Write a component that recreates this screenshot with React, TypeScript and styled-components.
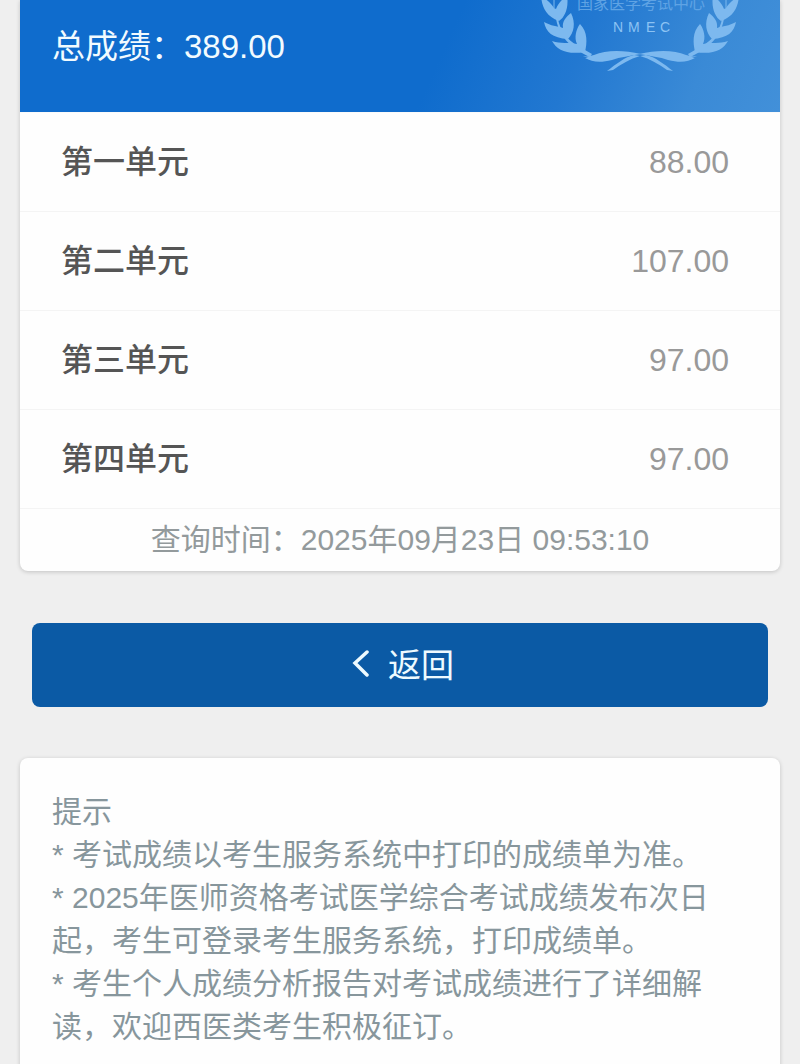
import styled, { createGlobalStyle } from "styled-components";

const units = [
  { name: "第一单元", score: "88.00" },
  { name: "第二单元", score: "107.00" },
  { name: "第三单元", score: "97.00" },
  { name: "第四单元", score: "97.00" },
];

const tips = [
  "* 考试成绩以考生服务系统中打印的成绩单为准。",
  "* 2025年医师资格考试医学综合考试成绩发布次日起，考生可登录考生服务系统，打印成绩单。",
  "* 考生个人成绩分析报告对考试成绩进行了详细解读，欢迎西医类考生积极征订。",
];

// one half of the wreath, mirrored for the other side
const Branch = () => (
  <>
    <path d="M1 -4C2 6 5 16 19 21C25 17 29 8 27 -5C23 -1 18 3 16 9L14 8C11 3 6 -1 1 -4Z" />
    <path d="M4 22C6 32 12 38 28 39C34 33 36 23 31 13C26 17 22 21 23 28C17 26 11 26 4 22Z" />
    <path d="M12 41C17 50 27 55 45 52C47 43 48 32 40 24C36 29 34 38 37 44C28 42 21 44 12 41Z" />
    <path d="M18 19C20 30 27 40 38 46L52 54L50 57C35 50 20 40 16 19Z" />
    <path d="M43 56C47 57 50 56 54 55C66 50 83 50 101 54C90 56 80 57 72 60C60 63 52 62 45 58L48 58Z" />
    <path d="M94 55C85 57 76 64 67 71L73 70C81 64 90 59 100 56Z" />
  </>
);

const Seal = () => (
  <SealSvg viewBox="0 0 200 72" aria-hidden="true">
    <g fill="#7db9ef">
      <Branch />
      <g transform="matrix(-1 0 0 1 200 0)">
        <Branch />
      </g>
      <path d="M14 -4V8" stroke="#7db9ef" strokeWidth="1" />
      <path d="M186 -4V8" stroke="#7db9ef" strokeWidth="1" />
    </g>
    <SealName x="37" y="9">
      国家医学考试中心
    </SealName>
    <SealCode x="73 88 106 120" y="32">
      NMEC
    </SealCode>
  </SealSvg>
);

export default function App() {
  return (
    <>
      <GlobalStyle />
      <Page lang="zh-CN">
        <ScoreCard>
          <Header>
            <Total>总成绩：389.00</Total>
            <Seal />
          </Header>
          <UnitList>
            {units.map((unit) => (
              <Unit key={unit.name}>
                <UnitName>{unit.name}</UnitName>
                <UnitScore>{unit.score}</UnitScore>
              </Unit>
            ))}
          </UnitList>
          <QueryTime>查询时间：2025年09月23日 09:53:10</QueryTime>
        </ScoreCard>
        <BackButton type="button">
          <svg width="18" height="30" viewBox="0 0 18 30" aria-hidden="true">
            <path
              d="M15 2L3 13L15 25"
              fill="none"
              stroke="currentColor"
              strokeWidth="3.5"
              strokeLinecap="round"
            />
          </svg>
          返回
        </BackButton>
        <TipsCard>
          <TipLine>提示</TipLine>
          {tips.map((tip) => (
            <TipLine key={tip}>{tip}</TipLine>
          ))}
        </TipsCard>
      </Page>
    </>
  );
}

const GlobalStyle = createGlobalStyle`
  * {
    box-sizing: border-box;
  }
  body {
    margin: 0;
    background: #efefef;
    font-family: "Liberation Sans", "Noto Sans CJK SC", sans-serif;
  }
`;

const Page = styled.main`
  display: flex;
  flex-direction: column;
  padding: 0 20px;
`;

const Card = styled.section`
  background: #fefefe;
  box-shadow: 0 1px 4px #00000030;
`;

const ScoreCard = styled(Card)`
  border-radius: 0 0 8px 8px;
`;

const Header = styled.header`
  display: flex;
  justify-content: space-between;
  align-items: flex-start;
  height: 112px;
  padding: 0 40px 0 32px;
  overflow: hidden;
  color: #f2fbff;
  background: linear-gradient(
    114deg,
    #0f6ccd 55%,
    #2278d1 72%,
    #3a8ad6 88%,
    #4290d9 100%
  );
`;

const Total = styled.h1`
  margin: 0;
  padding-top: 25px;
  font-size: 33px;
  line-height: 44px;
  font-weight: 400;
`;

const SealSvg = styled.svg`
  width: 200px;
  height: 72px;
`;

const SealName = styled.text`
  font-size: 16px;
  fill: #5fa3e4;
`;

const SealCode = styled.text`
  font-size: 14px;
  fill: #8cc3f3;
`;

const UnitList = styled.ul`
  margin: 0;
  padding: 0;
  list-style: none;
  border-top: 1px solid #fafafa;
`;

const Unit = styled.li`
  display: flex;
  justify-content: space-between;
  align-items: center;
  height: 99px;
  padding: 0 51px 0 41px;
  border-bottom: 1px solid #f4f4f4;
  font-size: 32px;
  line-height: 45px;
`;

const UnitName = styled.span`
  color: #555;
  font-weight: 500;
`;

const UnitScore = styled.span`
  color: #999;
`;

const QueryTime = styled.p`
  margin: 0;
  color: #939a9c;
  font-size: 30px;
  line-height: 62px;
  text-align: center;
`;

const BackButton = styled.button`
  display: flex;
  justify-content: center;
  align-items: center;
  gap: 18px;
  height: 84px;
  margin: 52px 12px 51px;
  padding: 0 0 0 6px;
  border: none;
  border-radius: 8px;
  background: #0b5aa5;
  color: #eefaff;
  font-family: inherit;
  font-size: 33px;
  line-height: 45px;
  cursor: pointer;
`;

const TipsCard = styled(Card)`
  padding: 32px;
  border-radius: 8px;
`;

const TipLine = styled.p`
  margin: 0;
  color: #87969c;
  font-size: 30px;
  line-height: 43px;
`;
